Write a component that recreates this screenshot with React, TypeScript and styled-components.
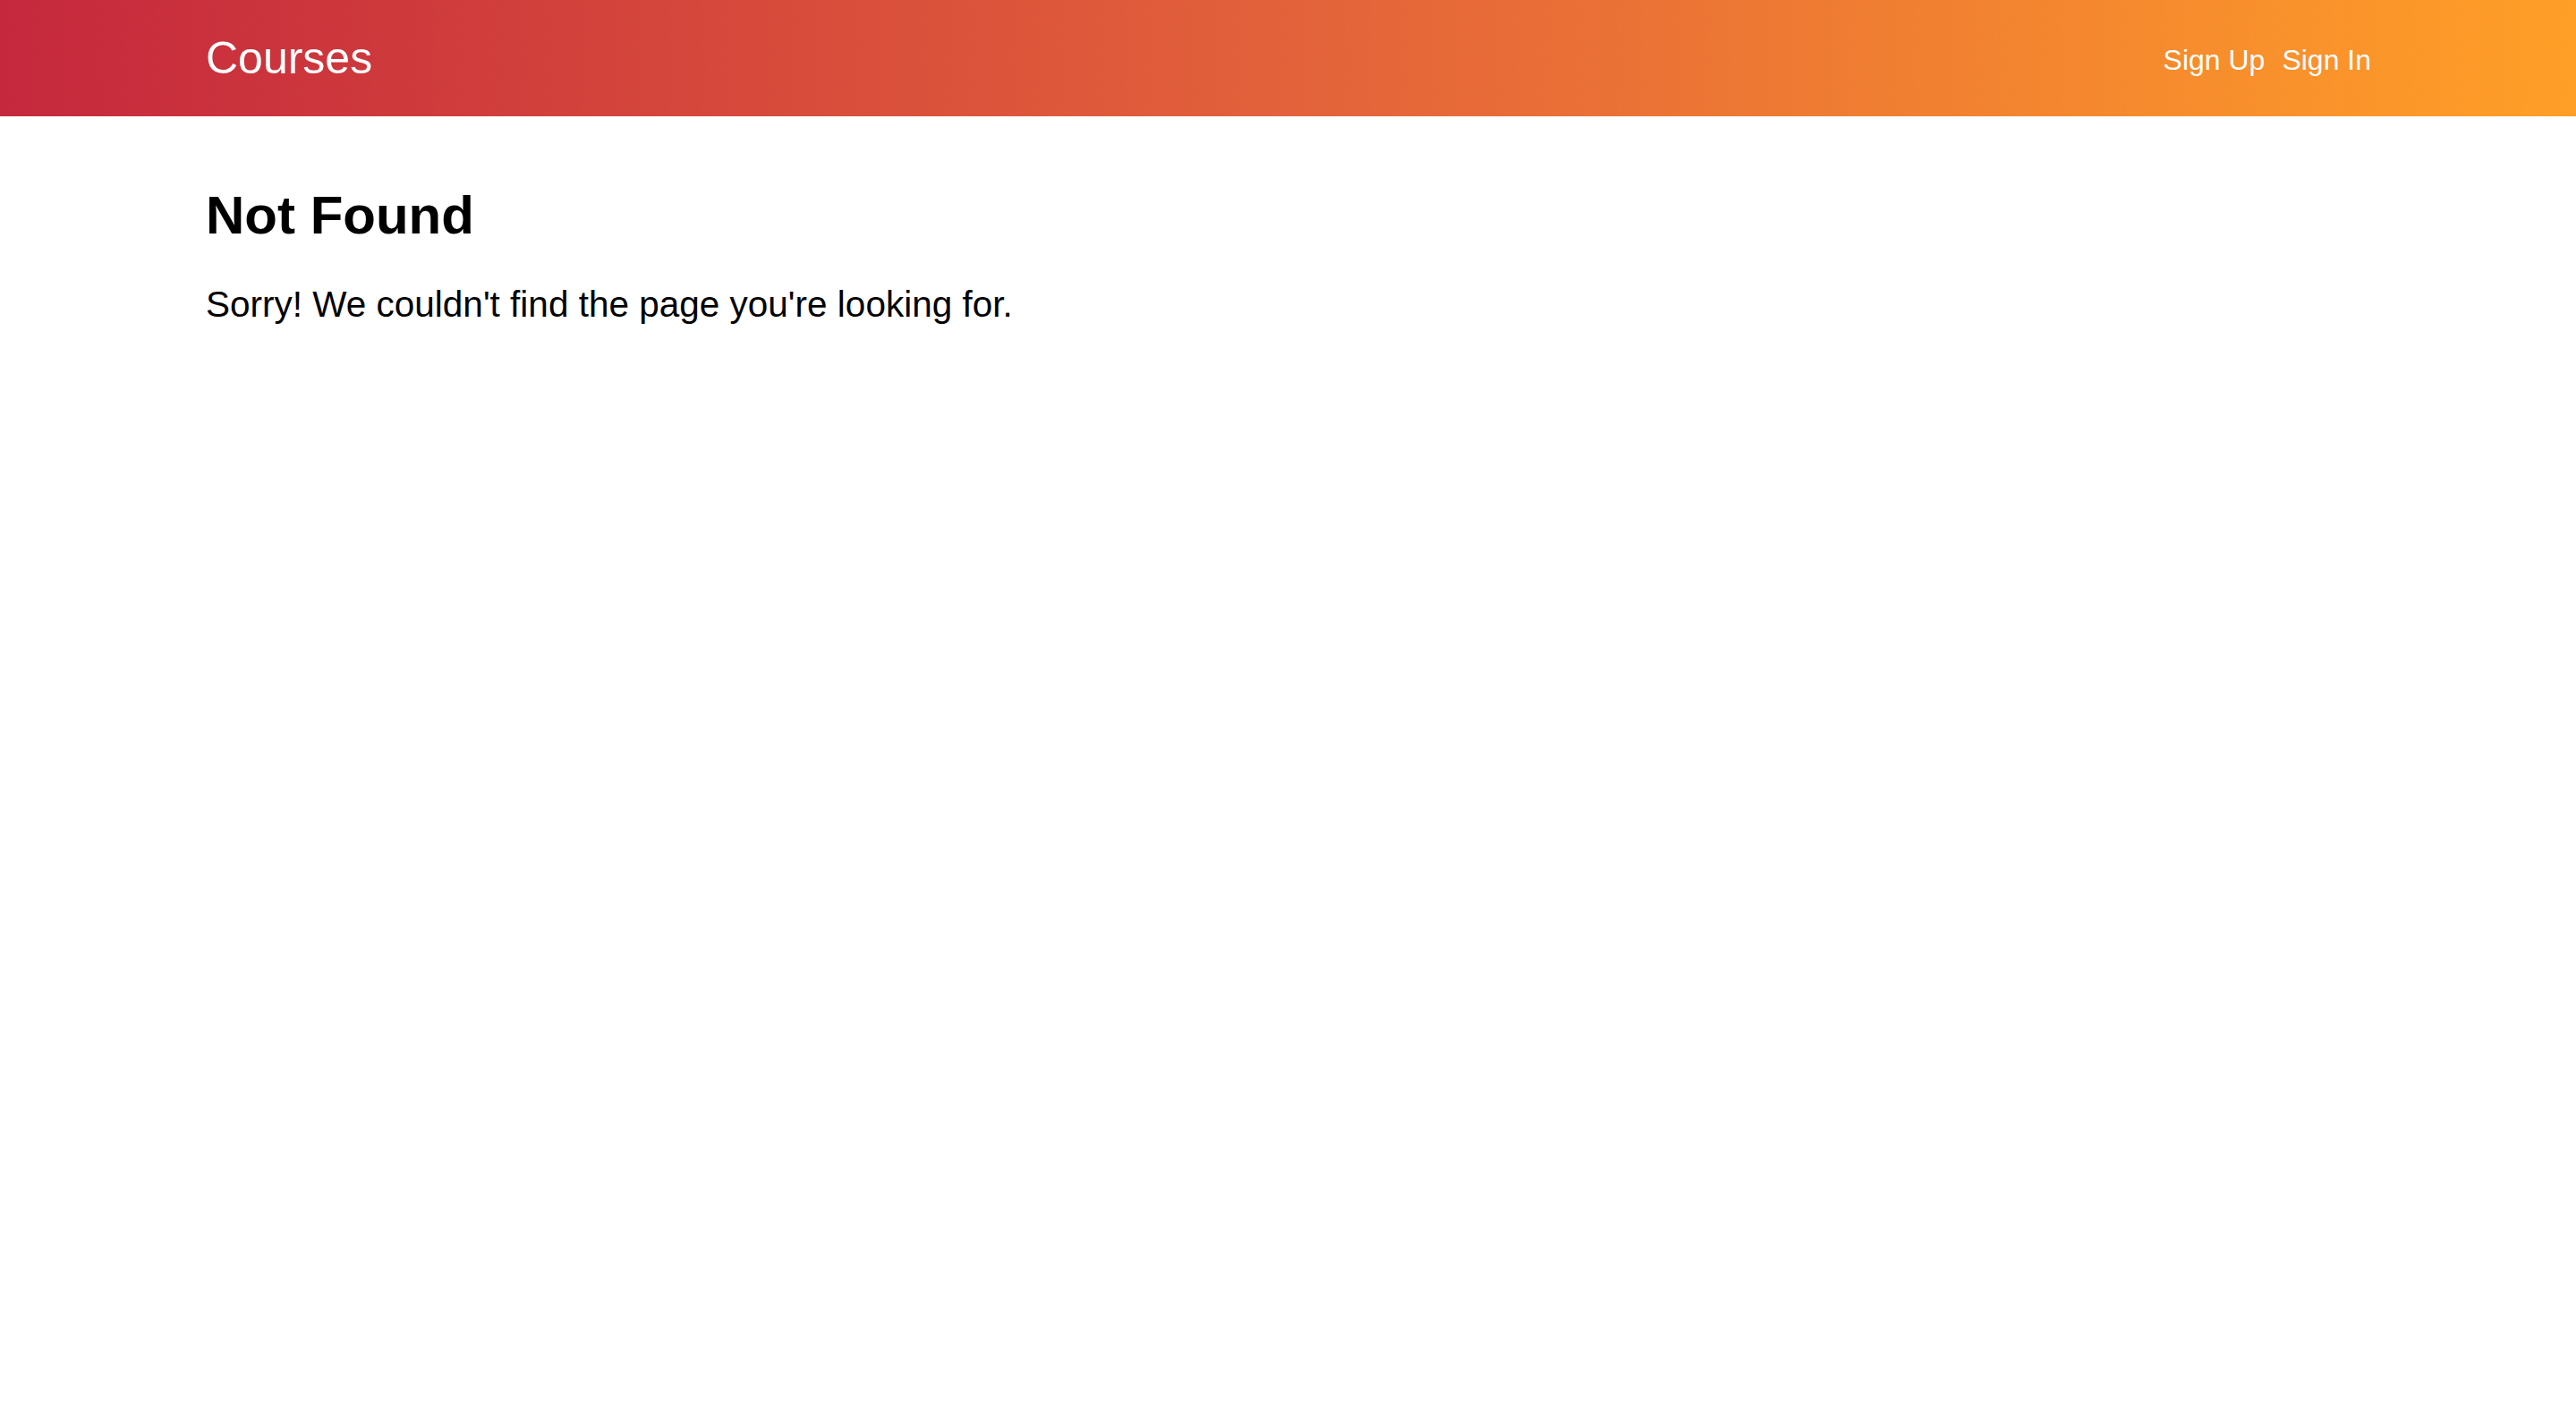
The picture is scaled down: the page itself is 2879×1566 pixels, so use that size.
import React from "react";
import styled, { createGlobalStyle } from "styled-components";

const GlobalStyle = createGlobalStyle`
  html, body {
    margin: 0;
    padding: 0;
    background: #ffffff;
  }
  body {
    font-family: "Liberation Sans", Arial, Helvetica, sans-serif;
    color: #000000;
  }
`;

const Header = styled.header`
  height: 130px;
  background: linear-gradient(90deg, #c5283d 0%, #e4643a 52%, #ff9f27 100%);
`;

const HeaderInner = styled.div`
  height: 100%;
  box-sizing: border-box;
  padding: 0 229px 0 230px;
  display: flex;
  align-items: center;
  justify-content: space-between;
`;

const Brand = styled.a`
  color: #ffffff;
  font-size: 50px;
  line-height: 1;
  text-decoration: none;
`;

const Nav = styled.nav`
  display: flex;
  align-items: center;
  gap: 19px;
  padding-top: 4px;
`;

const NavLink = styled.a`
  color: #ffffff;
  font-size: 32px;
  line-height: 1;
  text-decoration: none;
`;

const Main = styled.main`
  padding: 76px 229px 0 230px;
`;

const Title = styled.h1`
  margin: 0;
  font-size: 60px;
  font-weight: 700;
  line-height: 1.15;
`;

const Message = styled.p`
  margin: 42px 0 0 0;
  font-size: 40.5px;
  line-height: 1.15;
`;

export default function App() {
  return (
    <>
      <GlobalStyle />
      <Header>
        <HeaderInner>
          <Brand href="#">Courses</Brand>
          <Nav>
            <NavLink href="#">Sign Up</NavLink>
            <NavLink href="#">Sign In</NavLink>
          </Nav>
        </HeaderInner>
      </Header>
      <Main>
        <Title>Not Found</Title>
        <Message>Sorry! We couldn't find the page you're looking for.</Message>
      </Main>
    </>
  );
}
